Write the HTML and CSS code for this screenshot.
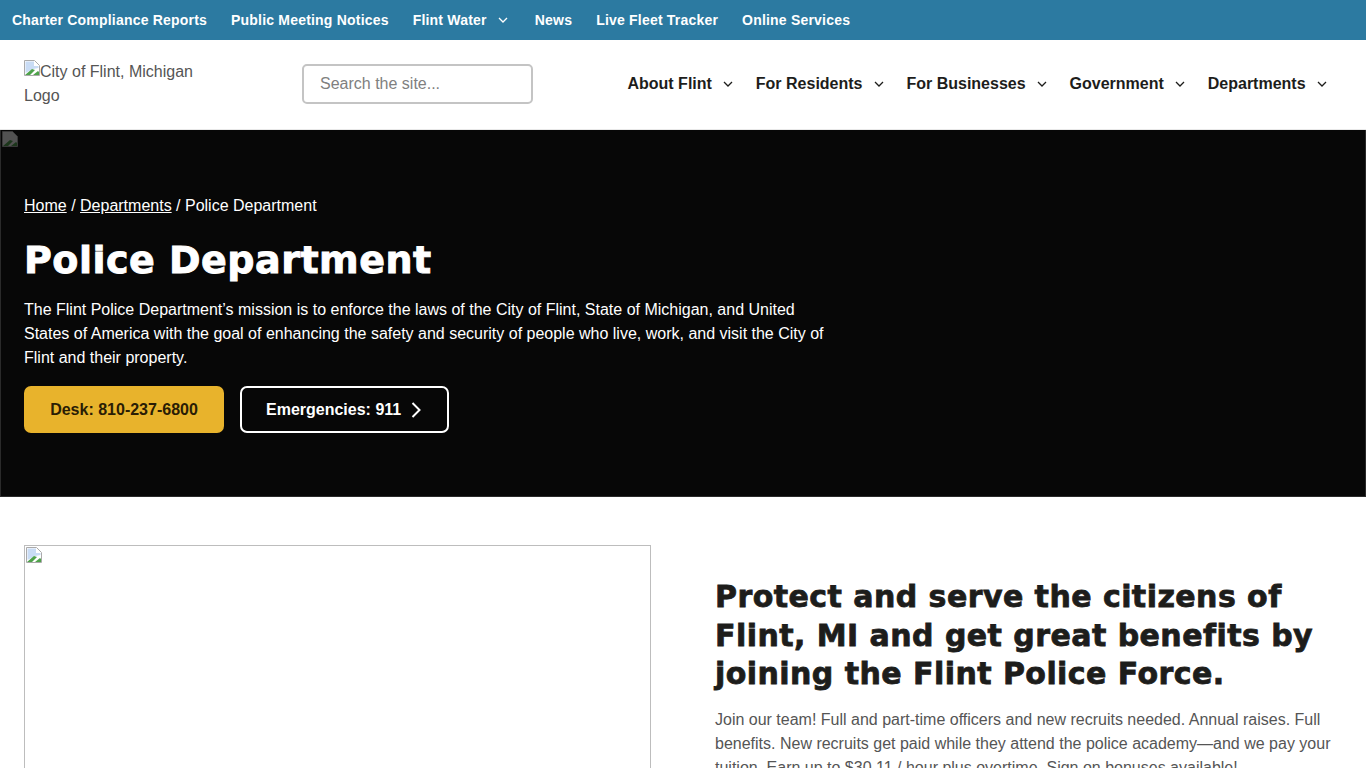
FILE: index.html
```html
<!DOCTYPE html>
<html lang="en">
<head>
<meta charset="utf-8">
<title>Police Department</title>
<link rel="stylesheet" href="styles.css">
</head>
<body>
<nav class="topbar">
  <a href="#">Charter Compliance Reports</a>
  <a href="#">Public Meeting Notices</a>
  <a href="#" class="has-caret">Flint Water <svg class="caret" viewBox="0 0 10 6"><path d="M1 1l4 4 4-4"/></svg></a>
  <a href="#">News</a>
  <a href="#">Live Fleet Tracker</a>
  <a href="#">Online Services</a>
</nav>
<header class="header">
  <a href="#" class="logo"><svg class="broken" viewBox="0 0 16 16"><path class="b-page" d="M.5.5h10l5 5v10H.5z"/><path class="b-sky" d="M1.500 1.500h8.500v4.500h4.500v2L9 9l-7.500 4z"/><path class="b-grass" d="M1 15l7-6 3 1-5 5zM9 15l5-4 1 1v3z"/></svg>City of Flint, Michigan Logo</a>
  <input class="search" type="text" placeholder="Search the site...">
  <nav class="mainnav">
    <a href="#">About Flint <svg class="caret" viewBox="0 0 10 6"><path d="M1 1l4 4 4-4"/></svg></a>
    <a href="#">For Residents <svg class="caret" viewBox="0 0 10 6"><path d="M1 1l4 4 4-4"/></svg></a>
    <a href="#">For Businesses <svg class="caret" viewBox="0 0 10 6"><path d="M1 1l4 4 4-4"/></svg></a>
    <a href="#">Government <svg class="caret" viewBox="0 0 10 6"><path d="M1 1l4 4 4-4"/></svg></a>
    <a href="#">Departments <svg class="caret" viewBox="0 0 10 6"><path d="M1 1l4 4 4-4"/></svg></a>
  </nav>
</header>
<section class="hero">
  <svg class="broken hero-broken" viewBox="0 0 16 16"><path class="b-page" d="M.5.5h10l5 5v10H.5z"/><path class="b-grass" d="M1 15l7-6 3 1-5 5zM9 15l5-4 1 1v3z"/></svg>
  <div class="crumbs"><a href="#">Home</a> / <a href="#">Departments</a> / Police Department</div>
  <h1>Police Department</h1>
  <p class="lead">The Flint Police Department’s mission is to enforce the laws of the City of Flint, State of Michigan, and United States of America with the goal of enhancing the safety and security of people who live, work, and visit the City of Flint and their property.</p>
  <div class="actions">
    <a href="#" class="btn btn-gold">Desk: 810-237-6800</a>
    <a href="#" class="btn btn-outline">Emergencies: 911 <svg class="chev" viewBox="0 0 10 16"><path d="M1.500 1l7 7-7 7"/></svg></a>
  </div>
</section>
<main class="main">
  <div class="photo"><svg class="broken" viewBox="0 0 16 16"><path class="b-page" d="M.5.5h10l5 5v10H.5z"/><path class="b-sky" d="M1.500 1.500h8.500v4.500h4.500v2L9 9l-7.500 4z"/><path class="b-grass" d="M1 15l7-6 3 1-5 5zM9 15l5-4 1 1v3z"/></svg></div>
  <div class="copy">
    <h2>Protect and serve the citizens of Flint, MI and get great benefits by joining the Flint Police Force.</h2>
    <p>Join our team! Full and part-time officers and new recruits needed. Annual raises. Full benefits. New recruits get paid while they attend the police academy—and we pay your tuition. Earn up to $30.11 / hour plus overtime. Sign on bonuses available!</p>
  </div>
</main>
</body>
</html>
```
FILE: styles.css
```css
* { box-sizing: border-box; }
html, body { margin: 0; height: 768px; overflow: hidden; }
body { font-family: "Liberation Sans", Arial, sans-serif; font-size: 16px; line-height: 24px; color: #1d1d1b; background: #fff; }
a { color: inherit; text-decoration: none; }

.topbar { display: flex; align-items: center; gap: 24px; height: 40px; padding: 0 12px; background: #2c7aa1; color: #fff; font-size: 14px; font-weight: 700; letter-spacing: .2px; }
.caret { width: 10px; height: 6px; margin-left: 7px; fill: none; stroke: currentColor; stroke-width: 1.3; vertical-align: 2px; }
.has-caret .caret { margin-left: 7px; margin-right: 3px; }

.header { display: flex; align-items: center; height: 90px; padding: 0 39px 2px 24px; border-bottom: 1px solid #e8e8e8; }
.logo { width: 180px; color: #555; margin-right: 98px; }
.broken { width: 16px; height: 16px; }
.logo .broken { vertical-align: 1px; }
.b-page { fill: #fff; stroke: #aaa; stroke-width: 1; }
.b-sky { fill: #c9dcf5; }
.b-grass { fill: #4ea24a; }
.search { width: 231px; height: 40px; padding: 0 16px; border: 2px solid #c4c4c4; border-radius: 5px; font: 16px "Liberation Sans", Arial, sans-serif; color: #555; background: #fff; }
.search::placeholder { color: #808080; opacity: 1; }
.mainnav { display: flex; gap: 22.5px; margin-left: auto; font-weight: 700; color: #1d1d1b; }
.mainnav a { white-space: nowrap; }

.hero { position: relative; height: 367px; padding: 64px 24px 0; background: #070707; color: #fff; border: 1px solid #2a2a2a; border-top: 0; }
.hero-broken { position: absolute; left: 1px; top: 1px; opacity: .3; }
.crumbs a { text-decoration: underline; }
.crumbs { margin-left: -1px; }
.hero h1 { margin: 18px 0 0 -1px; font: 700 38px/48px "DejaVu Sans", sans-serif; letter-spacing: .5px; -webkit-text-stroke: .9px #fff; color: #fff; }
.lead { width: 810px; margin: 14px 0 0 -1px; }
.actions { display: flex; gap: 16px; margin: 16px 0 0 -1px; }
.btn { display: flex; align-items: center; height: 47px; padding: 0 26px; border-radius: 7px; font-weight: 700; }
.btn-gold { width: 200px; justify-content: center; padding: 0; background: #e8b32c; color: #2a1d05; }
.btn-outline { border: 2px solid #fff; padding: 0 26px 0 24px; color: #fff; }
.chev { width: 10px; height: 16px; margin-left: 10px; fill: none; stroke: #fff; stroke-width: 2; }

.main { display: grid; grid-template-columns: 627px 1fr; column-gap: 64px; padding: 48px 24px 0; }
.photo { height: 418px; border: 1px solid #bdbdbd; }
.photo .broken { display: block; margin: 1px 0 0 1px; }
.copy { padding-top: 33px; }
.copy h2 { margin: 0; font: 700 30px/38.500px "DejaVu Sans", sans-serif; letter-spacing: .45px; -webkit-text-stroke: .8px #1d1d1b; color: #1d1d1b; }
.copy p { margin: 14px 0 0; color: #555; }
```
